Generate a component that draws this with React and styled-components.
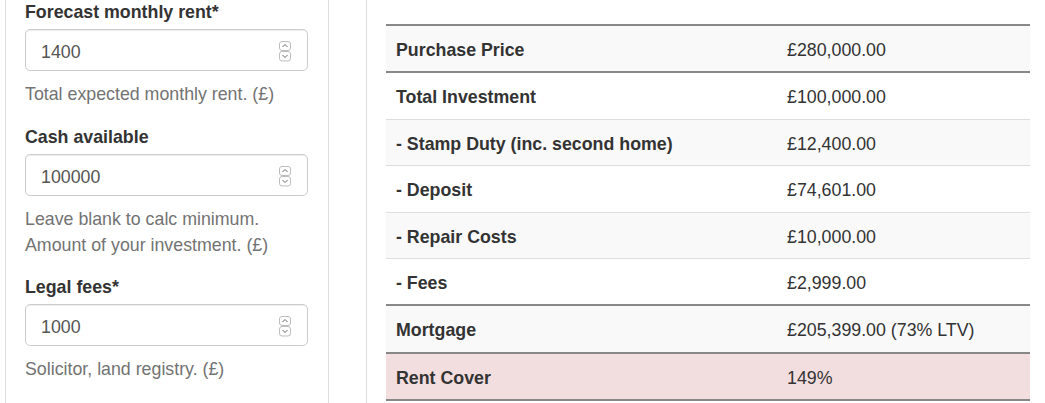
import React from "react";
import styled, { createGlobalStyle } from "styled-components";

const GlobalStyle = createGlobalStyle`
  html, body { margin: 0; padding: 0; background: #fff; }
  body {
    font-family: "Liberation Sans", Arial, Helvetica, sans-serif;
    font-size: 17.8px;
    line-height: 25.4px;
    color: #333;
  }
  * { box-sizing: border-box; }
`;

const Page = styled.div`
  display: flex;
  align-items: stretch;
  min-height: 403px;
  padding-left: 5px;
`;

const FormPanel = styled.div`
  width: 324px;
  flex: none;
  border-left: 1px solid #ddd;
  border-right: 1px solid #ddd;
  padding: 0 20px 0 19px;
`;

const FormGroup = styled.div`
  margin-bottom: 17px;
`;

const Label = styled.label`
  display: block;
  font-weight: bold;
  line-height: 25.4px;
  margin-bottom: 4px;
`;

const InputWrap = styled.div`
  position: relative;
  width: 283px;
`;

const Input = styled.input`
  display: block;
  width: 283px;
  height: 42px;
  padding: 5px 15px 0;
  font-family: inherit;
  font-size: 17.8px;
  color: #555;
  background: #fff;
  border: 1px solid #ccc;
  border-radius: 5px;
  box-shadow: inset 0 1px 1px rgba(0, 0, 0, 0.075);
  outline: none;
`;

const Spinner = styled.svg`
  position: absolute;
  right: 17px;
  top: 12px;
  width: 12px;
  height: 21px;
  pointer-events: none;
`;

const Help = styled.p`
  margin: 11px 0 0;
  color: #737373;
  line-height: 25.4px;
`;

const ResultsColumn = styled.div`
  margin-left: 37px;
  border-left: 1px solid #ddd;
  padding-left: 19px;
  flex: none;
`;

const Table = styled.table`
  width: 644px;
  margin-top: 24px;
  border-collapse: collapse;
  border-bottom: 2px solid #888;
`;

const Row = styled.tr`
  background: ${(p) => (p.$danger ? "#f2dede" : p.$striped ? "#f9f9f9" : "#fff")};
  & > td {
    border-top: ${(p) => (p.$thick ? "2px solid #888" : "1px solid #ddd")};
  }
`;

const HeadCell = styled.td`
  width: 391px;
  padding: 12px 10px 8px;
  line-height: 25.4px;
  font-weight: bold;
  color: #333;
  text-align: left;
`;

const ValueCell = styled.td`
  padding: 12px 10px 8px;
  line-height: 25.4px;
  color: #333;
`;

function SpinIcon() {
  return (
    <Spinner viewBox="0 0 12 21">
      <rect x="0.5" y="0.5" width="11" height="9" rx="2.5" fill="#fff" stroke="#bdbdbd" />
      <path d="M3.5 6 L6 3.5 L8.5 6" fill="none" stroke="#666" strokeWidth="1" />
      <rect x="0.5" y="10.5" width="11" height="9.5" rx="2.5" fill="#fff" stroke="#bdbdbd" />
      <path d="M3.5 14 L6 16.5 L8.5 14" fill="none" stroke="#666" strokeWidth="1" />
    </Spinner>
  );
}

const fields = [
  { label: "Forecast monthly rent*", value: "1400", help: "Total expected monthly rent. (£)" },
  { label: "Cash available", value: "100000", help: "Leave blank to calc minimum. Amount of your investment. (£)" },
  { label: "Legal fees*", value: "1000", help: "Solicitor, land registry. (£)" },
];

const rows = [
  { k: "Purchase Price", v: "£280,000.00", thick: true, striped: true },
  { k: "Total Investment", v: "£100,000.00", thick: true },
  { k: "- Stamp Duty (inc. second home)", v: "£12,400.00", striped: true },
  { k: "- Deposit", v: "£74,601.00" },
  { k: "- Repair Costs", v: "£10,000.00", striped: true },
  { k: "- Fees", v: "£2,999.00" },
  { k: "Mortgage", v: "£205,399.00 (73% LTV)", thick: true, striped: true },
  { k: "Rent Cover", v: "149%", thick: true, danger: true },
];

export default function App() {
  return (
    <>
      <GlobalStyle />
      <Page>
        <FormPanel>
          {fields.map((f) => (
            <FormGroup key={f.label}>
              <Label>{f.label}</Label>
              <InputWrap>
                <Input type="text" inputMode="numeric" defaultValue={f.value} />
                <SpinIcon />
              </InputWrap>
              <Help>{f.help}</Help>
            </FormGroup>
          ))}
        </FormPanel>
        <ResultsColumn>
          <Table>
            <tbody>
              {rows.map((r) => (
                <Row key={r.k} $thick={r.thick} $striped={r.striped} $danger={r.danger}>
                  <HeadCell>{r.k}</HeadCell>
                  <ValueCell>{r.v}</ValueCell>
                </Row>
              ))}
            </tbody>
          </Table>
        </ResultsColumn>
      </Page>
    </>
  );
}
